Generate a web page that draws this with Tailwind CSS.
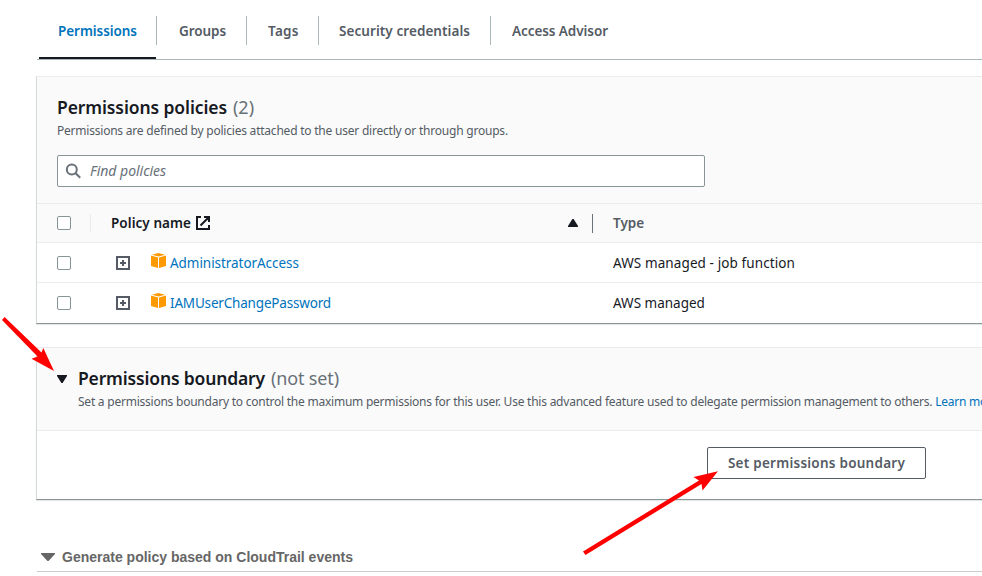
<!DOCTYPE html>
<html lang="en">
<head>
<meta charset="utf-8">
<title>Permissions</title>
<script src="https://cdn.jsdelivr.net/npm/@tailwindcss/browser@4"></script>
</head>
<body class="bg-white">
<div class="relative flex h-[576px] w-[982px] flex-col overflow-hidden font-['Noto_Sans','Open_Sans',sans-serif] text-[13.5px] leading-5 text-[#16191f]">

  <nav class="ml-[37px] flex h-[60px] shrink-0 border-b border-[#aab7b8] pl-px font-semibold text-[#545b64]">
    <div class="flex w-[119px] flex-col justify-between pl-px pt-4">
      <div class="flex h-[29px] items-center border-r border-[#aab7b8] pl-[19px] tracking-[-0.06px] text-[#0073bb]">Permissions</div>
      <div class="mr-px h-[2px] bg-[#16191f]"></div>
    </div>
    <div class="mt-4 flex h-[29px] w-[90px] items-center border-r border-[#aab7b8] pl-[22px] tracking-[-0.08px]">Groups</div>
    <div class="mt-4 flex h-[29px] w-[72px] items-center border-r border-[#aab7b8] pl-[21px] tracking-[0.3px]">Tags</div>
    <div class="mt-4 flex h-[29px] w-[172px] items-center border-r border-[#aab7b8] pl-[20px] tracking-[0.07px]">Security credentials</div>
    <div class="mt-4 flex h-[29px] items-center pl-[21px] tracking-[-0.07px]">Access Advisor</div>
  </nav>

  <section class="ml-9 mt-4 flex h-[248px] shrink-0 flex-col border-b border-l border-t border-b-[#879596] border-l-[#d5dbdb] border-t-[#eaeded] shadow-[0_1px_1px_#00000018]">
    <header class="h-[127px] border-b border-[#eaeded] bg-[#fafafa] pl-5 pt-[18px]">
      <h2 class="flex h-6 items-center gap-[6px] text-[17.5px] font-semibold tracking-[-0.1px]">Permissions policies <span class="text-lg font-normal tracking-normal text-[#687078]">(2)</span></h2>
      <p class="h-4 text-xs leading-[24px] tracking-[-0.22px] text-[#545b64]">Permissions are defined by policies attached to the user directly or through groups.</p>
      <div class="mt-5 flex h-8 w-[648px] items-center rounded-[2px] border border-[#879596] bg-white pl-[7px]">
        <svg class="size-4" viewBox="0 0 16 16" fill="none" stroke="#687078" stroke-width="2"><circle cx="6.8" cy="6.4" r="5"/><path d="M10.4 10l4.8 4.8"/></svg>
        <span class="ml-[9px] text-sm italic tracking-[-0.02px] text-[#687078]">Find policies</span>
      </div>
    </header>
    <div class="flex h-[39px] items-center border-b border-[#eaeded] bg-[#fafafa] pl-5 font-semibold">
      <span class="size-[14px] rounded-[2px] border border-[#879596] bg-white"></span>
      <span class="ml-[19px] h-[19px] w-px bg-[#eaeded]"></span>
      <span class="ml-5 w-[85px] whitespace-nowrap tracking-[0.06px]">Policy name</span>
      <svg class="size-[14px]" viewBox="0 0 14 14" fill="none" stroke="#16191f" stroke-width="2"><path d="M5 1H1v12h12V9M8 1h5v5M12.5 1.5L4.5 9.5"/></svg>
      <svg class="ml-[358px] h-2 w-[10px]" viewBox="0 0 10 8" fill="#16191f"><path d="M4.4 0h1.2L10 7v1H0V7z"/></svg>
      <span class="ml-[14px] h-[19px] w-px bg-[#687078]"></span>
      <span class="ml-5 tracking-[-0.03px] text-[#545b64]">Type</span>
    </div>
    <div class="flex h-10 items-center border-b border-[#eaeded] pl-5">
      <span class="size-[14px] rounded-[2px] border border-[#879596] bg-white"></span>
      <svg class="ml-[45px] size-[14px]" viewBox="0 0 14 14" fill="none" stroke="#545b64" stroke-width="2"><rect x="1" y="1" width="12" height="12"/><path d="M4 7h6M7 4v6"/></svg>
      <svg class="mb-[5px] ml-[21px] h-[15px] w-[15px]" viewBox="0 0 15 15" fill="#ff9900"><path d="M7.5 0L14 1.7 7.5 3.6 1 1.7zM0 2.6l7 2V15l-7-2zM15 2.6l-7 2V15l7-2z"/></svg>
      <span class="ml-1 w-[443px] tracking-[-0.05px] text-[#0073bb]">AdministratorAccess</span>
      <span class="tracking-[0.1px]">AWS managed - job function</span>
    </div>
    <div class="flex h-10 items-center pl-5">
      <span class="size-[14px] rounded-[2px] border border-[#879596] bg-white"></span>
      <svg class="ml-[45px] size-[14px]" viewBox="0 0 14 14" fill="none" stroke="#545b64" stroke-width="2"><rect x="1" y="1" width="12" height="12"/><path d="M4 7h6M7 4v6"/></svg>
      <svg class="mb-[5px] ml-[21px] h-[15px] w-[15px]" viewBox="0 0 15 15" fill="#ff9900"><path d="M7.5 0L14 1.7 7.5 3.6 1 1.7zM0 2.6l7 2V15l-7-2zM15 2.6l-7 2V15l7-2z"/></svg>
      <span class="ml-1 w-[443px] tracking-[-0.18px] text-[#0073bb]">IAMUserChangePassword</span>
      <span>AWS managed</span>
    </div>
  </section>

  <section class="ml-9 mt-[23px] flex h-[153px] shrink-0 flex-col border-b border-l border-t border-b-[#879596] border-l-[#d5dbdb] border-t-[#eaeded] shadow-[0_1px_1px_#00000018]">
    <header class="flex h-[83px] border-b border-[#eaeded] bg-[#fafafa] pl-5 pt-[18px]">
      <svg class="mt-[9px] h-2 w-[10px] shrink-0" viewBox="0 0 10 8" fill="#16191f"><path d="M0 0h10v1L5.6 8H4.4L0 1z"/></svg>
      <div class="ml-[11px] whitespace-nowrap">
        <h2 class="flex h-6 items-center gap-[6px] text-[17.5px] font-semibold tracking-[-0.16px]">Permissions boundary <span class="text-lg font-normal tracking-[-0.14px] text-[#687078]">(not set)</span></h2>
        <p class="text-xs leading-[24px] tracking-[-0.235px] text-[#545b64]">Set a permissions boundary to control the maximum permissions for this user. Use this advanced feature used to delegate permission management to others. <span class="text-[#0073bb]">Learn more</span></p>
      </div>
    </header>
    <div class="flex justify-end pr-14 pt-4">
      <button class="h-8 w-[219px] rounded-[2px] border border-[#545b64] bg-white font-semibold tracking-[0.25px] text-[#545b64]">Set permissions boundary</button>
    </div>
  </section>

  <div class="ml-[37px] mt-[43px] flex h-[29px] shrink-0 items-center border-b border-[#cccccc] pl-1 font-['Liberation_Sans',Arial,sans-serif] text-sm font-bold text-[#666666]">
    <svg class="h-2 w-[14px]" viewBox="0 0 14 8" fill="#666666"><path d="M0 0h14v1L7.5 8h-1L0 1z"/></svg>
    <span class="ml-[7px]">Generate policy based on CloudTrail events</span>
  </div>

  <svg class="pointer-events-none absolute inset-0 h-[576px] w-[982px]" viewBox="0 0 982 576" fill="#ff0000" stroke="none">
    <path d="M4.6 317L41.5 352.5 43.3 348 54 371 31.5 358.8 37.5 356.5 2 320z"/>
    <path d="M583 551.5L699 480.5 693.5 477 718 471.3 702.5 490.5 701.5 484 585.5 555z"/>
  </svg>
</div>
</body>
</html>
